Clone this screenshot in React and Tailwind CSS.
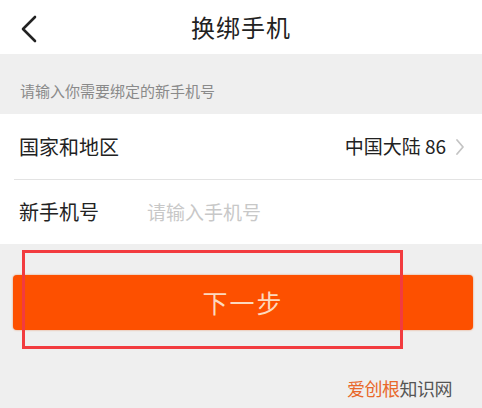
const font = { fontFamily: '"Noto Sans CJK SC", "Noto Sans", sans-serif' };

export default function App() {
  return (
    <div className="relative w-[482px] h-[408px] overflow-hidden bg-[#efefef]" style={font}>
      <header className="relative h-[54px] bg-white flex items-center justify-center">
        <svg className="absolute left-[20px] top-[14px]" width="18" height="30" viewBox="0 0 18 30" fill="none">
          <polyline points="15,3 3,15 15,27" stroke="#222" strokeWidth="2.6" strokeLinecap="round" strokeLinejoin="round" />
        </svg>
        <h1 className="text-[24px] leading-none text-[#222] tracking-[1px]">换绑手机</h1>
      </header>

      <div className="h-[60px] flex items-center pl-[20px] pt-[14px]">
        <span className="text-[15px] text-[#8a8a8a]">请输入你需要绑定的新手机号</span>
      </div>

      <section className="bg-white">
        <div className="h-[66px] flex items-center justify-between pl-[5px] pr-[17px] border-b border-[#e3e3e3] ml-[14px]">
          <span className="text-[20px] text-[#222]">国家和地区</span>
          <div className="flex items-center gap-[9px]">
            <span className="text-[19px] text-[#222]">中国大陆 86</span>
            <svg width="10" height="18" viewBox="0 0 10 18" fill="none">
              <polyline points="2,2 8,9 2,16" stroke="#c4c4c4" strokeWidth="1.8" strokeLinecap="round" strokeLinejoin="round" />
            </svg>
          </div>
        </div>
        <div className="h-[64px] flex items-center pl-[19px]">
          <span className="text-[20px] text-[#222] w-[128px]">新手机号</span>
          <span className="text-[19px] text-[#c8c8c8]">请输入手机号</span>
        </div>
      </section>

      <div className="px-[13px] pt-[31px] pr-[9px]">
        <button className="w-full h-[55px] rounded-[4px] bg-[#fd5000] text-[#fcd9bf] text-[25px] tracking-[2px] shadow-[0_0_2px_#e38a5a]">
          下一步
        </button>
      </div>

      <div className="absolute left-[22px] top-[250px] w-[381px] h-[99px] border-[3px] border-[#f23b3f]" />

      <div className="absolute left-[347px] top-[375px] text-[18px] tracking-[-0.5px]">
        <span className="text-[#e8682a]">爱创根</span>
        <span className="text-[#555]">知识网</span>
      </div>
    </div>
  );
}
